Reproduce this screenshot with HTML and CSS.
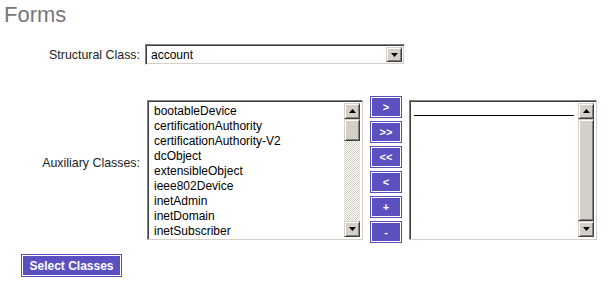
FILE: index.html
```html
<!DOCTYPE html>
<html>
<head>
<meta charset="utf-8">
<link rel="stylesheet" href="styles.css">
</head>
<body>
<div class="page">
  <h1 class="title">Forms</h1>
  <div class="form">
    <div class="label label-struct">Structural Class:</div>
    <div class="field">
      <div class="select">
        <span class="select-text">account</span>
        <span class="btn3d select-btn">
          <svg width="7" height="4" viewBox="0 0 7 4"><polygon points="0,0 7,0 3.5,4" fill="#000"/></svg>
        </span>
      </div>
    </div>
    <div class="label label-aux">Auxiliary Classes:</div>
    <div class="field aux">
      <div class="listbox left">
        <div class="items">
          <div>bootableDevice</div>
          <div>certificationAuthority</div>
          <div>certificationAuthority-V2</div>
          <div>dcObject</div>
          <div>extensibleObject</div>
          <div>ieee802Device</div>
          <div>inetAdmin</div>
          <div>inetDomain</div>
          <div>inetSubscriber</div>
        </div>
        <div class="scrollbar">
          <span class="btn3d arrow"><svg width="7" height="4" viewBox="0 0 7 4"><polygon points="3.5,0 7,4 0,4" fill="#000"/></svg></span>
          <span class="btn3d thumb"></span>
          <span class="track"></span>
          <span class="btn3d arrow"><svg width="7" height="4" viewBox="0 0 7 4"><polygon points="0,0 7,0 3.5,4" fill="#000"/></svg></span>
        </div>
      </div>
      <div class="movers">
        <button class="pbtn">&gt;</button>
        <button class="pbtn">&gt;&gt;</button>
        <button class="pbtn">&lt;&lt;</button>
        <button class="pbtn">&lt;</button>
        <button class="pbtn">+</button>
        <button class="pbtn">-</button>
      </div>
      <div class="listbox right">
        <div class="items">
          <div class="rule"></div>
        </div>
        <div class="scrollbar">
          <span class="btn3d arrow"><svg width="7" height="4" viewBox="0 0 7 4"><polygon points="3.5,0 7,4 0,4" fill="#000"/></svg></span>
          <span class="btn3d fullthumb"></span>
          <span class="btn3d arrow"><svg width="7" height="4" viewBox="0 0 7 4"><polygon points="0,0 7,0 3.5,4" fill="#000"/></svg></span>
        </div>
      </div>
    </div>
  </div>
  <button class="pbtn submit">Select Classes</button>
</div>
</body>
</html>
```

FILE: styles.css
```css
html, body {
  margin: 0;
  padding: 0;
  background: #fff;
}
.page {
  padding: 2px 0 0 4px;
  font-family: "Liberation Sans", Arial, sans-serif;
  font-size: 12px;
  color: #222;
}
.title {
  margin: 0;
  font-size: 22px;
  line-height: 26px;
  font-weight: normal;
  color: #777;
}
.form {
  margin-top: 16px;
  display: grid;
  grid-template-columns: 136px auto;
  column-gap: 5px;
  row-gap: 31px;
  align-items: center;
}
.label {
  text-align: right;
  color: #222;
  font-size: 12.4px;
}
.label-struct {
  padding-top: 1px;
}
.label-aux {
  padding-bottom: 14px;
}
.field {
  display: flex;
}
.select {
  box-sizing: border-box;
  width: 260px;
  height: 21px;
  background: #fff;
  border: 1px solid;
  border-color: #808080 #fff #fff #808080;
  box-shadow: inset 1px 1px #404040, inset -1px -1px #d4d0c8;
  padding: 2px;
  display: flex;
  align-items: stretch;
}
.select-text {
  flex: 1;
  padding: 1px 0 0 3px;
  line-height: 15px;
  color: #000;
}
.btn3d {
  box-sizing: border-box;
  display: flex;
  align-items: center;
  justify-content: center;
  background: #d4d0c8;
  border: 1px solid;
  border-color: #d4d0c8 #404040 #404040 #d4d0c8;
  box-shadow: inset 1px 1px #fff, inset -1px -1px #808080;
}
.select-btn {
  width: 16px;
}
.aux {
  align-items: center;
  gap: 7px;
  margin-left: 2px;
}
.listbox {
  box-sizing: border-box;
  height: 140px;
  background: #fff;
  border: 1px solid;
  border-color: #808080 #d4d0c8 #d4d0c8 #808080;
  box-shadow: inset 1px 1px #404040, inset -1px -1px #fff;
  padding: 2px;
  display: flex;
}
.listbox.left {
  width: 216px;
}
.listbox.right {
  width: 188px;
}
.items {
  flex: 1;
  padding: 1px 0 0 4px;
  line-height: 15px;
  color: #000;
  overflow: hidden;
}
.rule {
  height: 1px;
  background: #000;
  margin: 11px 4px 0 -2px;
}
.scrollbar {
  width: 16px;
  display: flex;
  flex-direction: column;
}
.arrow {
  height: 16px;
  flex: none;
}
.thumb {
  height: 22px;
  flex: none;
}
.track {
  flex: 1;
  background: repeating-conic-gradient(#d4d0c8 0 25%, #fff 0 50%) 0 0 / 2px 2px;
}
.fullthumb {
  flex: 1;
}
.movers {
  display: flex;
  flex-direction: column;
  gap: 3px;
}
.pbtn {
  box-sizing: border-box;
  margin: 0;
  border: 1px solid #5b50c0;
  box-shadow: inset 0 0 0 1px #fff;
  background: #5b50c0;
  color: #fff;
  font-family: "Liberation Sans", Arial, sans-serif;
  font-weight: bold;
  font-size: 11px;
  padding: 0;
  cursor: pointer;
}
.movers .pbtn {
  width: 32px;
  height: 22px;
}
.submit {
  display: block;
  margin: 11px 0 0 17px;
  width: 101px;
  height: 23px;
  font-size: 12px;
}
```
